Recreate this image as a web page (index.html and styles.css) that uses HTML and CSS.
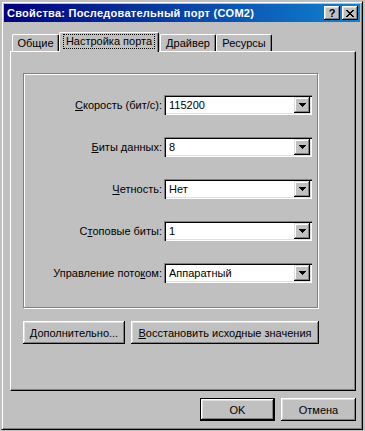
FILE: index.html
```html
<!DOCTYPE html>
<html lang="ru">
<head>
    <meta charset="utf-8">
    <title>Свойства: Последовательный порт (COM2)</title>
    <link rel="stylesheet" href="styles.css">
</head>
<body>
    <div class="window">
        <div class="titlebar">
            <span class="title">Свойства: Последовательный порт (COM2)</span>
            <div class="caption-buttons">
                <button class="cap-btn help">?</button>
                <button class="cap-btn close">
                    <svg width="8" height="7" viewBox="0 0 8 7" shape-rendering="crispEdges"><path d="M0 0h2v1H0zM6 0h2v1H6zM1 1h2v1H1zM5 1h2v1H5zM2 2h4v1H2zM3 3h2v1H3zM2 4h4v1H2zM1 5h2v1H1zM5 5h2v1H5zM0 6h2v1H0zM6 6h2v1H6z"/></svg>
                </button>
            </div>
        </div>
        <div class="dialog-body">
            <div class="tabs">
                <div class="tab tab-general">Общие</div>
                <div class="tab tab-port active"><span class="focus">Настройка порта</span></div>
                <div class="tab tab-driver">Драйвер</div>
                <div class="tab tab-res">Ресурсы</div>
            </div>
            <div class="tab-panel">
                <div class="group">
                    <div class="field-row">
                        <label><u>С</u>корость (бит/с):</label>
                        <div class="combo"><span class="combo-value">115200</span><span class="drop"><svg width="7" height="4" viewBox="0 0 7 4" shape-rendering="crispEdges"><path d="M0 0h7v1H0zM1 1h5v1H1zM2 2h3v1H2zM3 3h1v1H3z"/></svg></span></div>
                    </div>
                    <div class="field-row">
                        <label><u>Б</u>иты данных:</label>
                        <div class="combo"><span class="combo-value">8</span><span class="drop"><svg width="7" height="4" viewBox="0 0 7 4" shape-rendering="crispEdges"><path d="M0 0h7v1H0zM1 1h5v1H1zM2 2h3v1H2zM3 3h1v1H3z"/></svg></span></div>
                    </div>
                    <div class="field-row">
                        <label><u>Ч</u>етность:</label>
                        <div class="combo"><span class="combo-value">Нет</span><span class="drop"><svg width="7" height="4" viewBox="0 0 7 4" shape-rendering="crispEdges"><path d="M0 0h7v1H0zM1 1h5v1H1zM2 2h3v1H2zM3 3h1v1H3z"/></svg></span></div>
                    </div>
                    <div class="field-row">
                        <label>С<u>т</u>оповые биты:</label>
                        <div class="combo"><span class="combo-value">1</span><span class="drop"><svg width="7" height="4" viewBox="0 0 7 4" shape-rendering="crispEdges"><path d="M0 0h7v1H0zM1 1h5v1H1zM2 2h3v1H2zM3 3h1v1H3z"/></svg></span></div>
                    </div>
                    <div class="field-row">
                        <label>Управление пото<u>к</u>ом:</label>
                        <div class="combo"><span class="combo-value">Аппаратный</span><span class="drop"><svg width="7" height="4" viewBox="0 0 7 4" shape-rendering="crispEdges"><path d="M0 0h7v1H0zM1 1h5v1H1zM2 2h3v1H2zM3 3h1v1H3z"/></svg></span></div>
                    </div>
                </div>
                <div class="panel-buttons">
                    <button class="btn btn-advanced"><u>Д</u>ополнительно...</button>
                    <button class="btn btn-restore"><u>В</u>осстановить исходные значения</button>
                </div>
            </div>
            <div class="dialog-buttons">
                <button class="btn btn-ok default">OK</button>
                <button class="btn btn-cancel">Отмена</button>
            </div>
        </div>
    </div>
</body>
</html>
```

FILE: styles.css
```css
* {
    box-sizing: border-box;
}
body {
    margin: 0;
    padding: 1px 0 0 1px;
    background-color: #c0c0c0;
    font-family: "Liberation Sans", Arial, sans-serif;
    font-size: 11px;
    color: #000;
}
/* окно в классическом стиле */
.window {
    width: 362px;
    height: 429px;
    background-color: #c0c0c0;
    border: 1px solid;
    border-color: #c0c0c0 #000 #000 #c0c0c0;
    box-shadow: inset 1px 1px #fff, inset -1px -1px #808080;
    padding: 2px;
}
.titlebar {
    height: 18px;
    background: linear-gradient(to right, #000080, #1084d0);
    display: flex;
    align-items: center;
    justify-content: space-between;
    padding: 0 2px 0 3px;
}
.title {
    color: #fff;
    font-family: "Liberation Sans", Arial, sans-serif;
    font-weight: bold;
    font-size: 11px;
    letter-spacing: 0.25px;
    white-space: nowrap;
}
.caption-buttons {
    display: flex;
    gap: 2px;
}
.cap-btn {
    width: 16px;
    height: 14px;
    padding: 0;
    border: 0;
    background-color: #c0c0c0;
    box-shadow: inset -1px -1px #000, inset 1px 1px #fff, inset -2px -2px #808080, inset 2px 2px #dfdfdf;
    display: flex;
    align-items: center;
    justify-content: center;
    font-family: "Liberation Sans", Arial, sans-serif;
    font-weight: bold;
    font-size: 11px;
    color: #000;
    line-height: 1;
}
.dialog-body {
    padding: 10px 4px 0 6px;
}
/* вкладки */
.tabs {
    display: flex;
    align-items: flex-end;
    height: 19px;
    padding-left: 2px;
}
.tab {
    height: 17px;
    border-top: 1px solid #fff;
    border-left: 1px solid #fff;
    border-right: 1px solid #000;
    border-radius: 2px 2px 0 0;
    box-shadow: inset -1px 0 #808080;
    display: flex;
    align-items: center;
    justify-content: center;
    white-space: nowrap;
}
.tab-general { width: 47px; }
.tab-driver { width: 56px; }
.tab-res { width: 56px; }
.tab.active {
    width: 100px;
    height: 20px;
    margin: 0 1px -1px 0;
    background-color: #c0c0c0;
    position: relative;
    z-index: 1;
    padding-bottom: 2px;
}
.focus {
    outline: 1px dotted #000;
    padding: 0 2px;
    line-height: 13px;
}
.tab-panel {
    height: 340px;
    border: 1px solid;
    border-color: #fff #000 #000 #fff;
    box-shadow: inset -1px -1px #808080;
    padding: 21px 0 0 12px;
}
/* рамка с полями */
.group {
    width: 295px;
    height: 235px;
    border: 1px solid #808080;
    box-shadow: inset 1px 1px #fff, 1px 1px #fff;
    padding: 21px 5px 0 0;
    display: flex;
    flex-direction: column;
    gap: 22px;
}
.field-row {
    height: 20px;
    display: flex;
    justify-content: flex-end;
    align-items: center;
    gap: 2px;
}
.combo {
    width: 148px;
    height: 20px;
    background-color: #fff;
    box-shadow: inset 1px 1px #808080, inset 2px 2px #000, inset -1px -1px #fff, inset -2px -2px #dfdfdf;
    display: flex;
    align-items: center;
    justify-content: space-between;
    padding: 2px;
}
.combo-value {
    padding-left: 3px;
}
.drop {
    width: 16px;
    height: 16px;
    background-color: #c0c0c0;
    box-shadow: inset -1px -1px #000, inset 1px 1px #dfdfdf, inset -2px -2px #808080, inset 2px 2px #fff;
    display: flex;
    align-items: center;
    justify-content: center;
}
/* кнопки */
.btn {
    height: 23px;
    padding: 0;
    border: 0;
    background-color: #c0c0c0;
    box-shadow: inset -1px -1px #000, inset 1px 1px #fff, inset -2px -2px #808080, inset 2px 2px #dfdfdf;
    font-family: "Liberation Sans", Arial, sans-serif;
    font-size: 11px;
    color: #000;
}
.btn.default {
    box-shadow: inset 0 0 0 1px #000, inset -2px -2px #000, inset 2px 2px #fff, inset -3px -3px #808080, inset 3px 3px #dfdfdf;
}
.panel-buttons {
    display: flex;
    gap: 6px;
    margin-top: 13px;
}
.btn-advanced { width: 102px; }
.btn-restore { width: 188px; }
.dialog-buttons {
    display: flex;
    justify-content: flex-end;
    gap: 6px;
    margin-top: 7px;
}
.btn-ok,
.btn-cancel {
    width: 75px;
}
```
